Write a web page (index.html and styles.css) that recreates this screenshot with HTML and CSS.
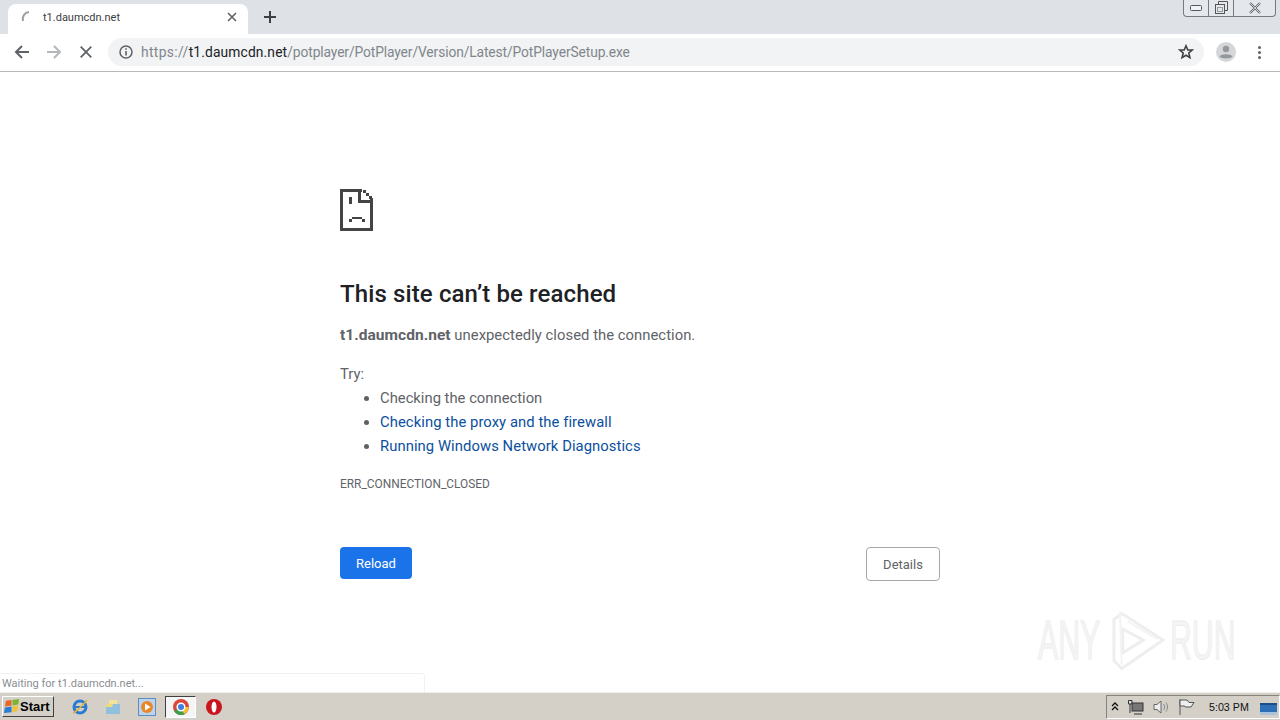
FILE: index.html
```html
<!DOCTYPE html>
<html lang="en">
<head>
<meta charset="utf-8">
<title>t1.daumcdn.net</title>
<link rel="stylesheet" href="styles.css">
</head>
<body>
<div class="tabstrip">
  <div class="tab">
    <svg class="spinner" width="16" height="16" viewBox="0 0 16 16"><path d="M3 12 A7 7 0 0 1 9 3" fill="none" stroke="#9aa0a6" stroke-width="2"/></svg>
    <span class="tab-title">t1.daumcdn.net</span>
    <svg class="tab-close" width="10" height="10" viewBox="0 0 10 10"><path d="M1 1 9 9M9 1 1 9" stroke="#5f6368" stroke-width="1.6"/></svg>
  </div>
  <svg class="newtab" width="12" height="12" viewBox="0 0 12 12"><path d="M6 0V12M0 6H12" stroke="#3c4043" stroke-width="2"/></svg>
  <div class="winctl">
    <div class="wbtn wmin"><svg width="12" height="8" viewBox="0 0 12 8"><rect x="0.5" y="1.5" width="11" height="5" rx="1" fill="#f0f2f5" stroke="#555"/></svg></div>
    <div class="wbtn wmax"><svg width="14" height="14" viewBox="0 0 14 14"><path d="M4.5 3.5V.5H13.5V9.500H10.500" fill="none" stroke="#555"/><rect x="1.500" y="3.500" width="9" height="9" fill="none" stroke="#555"/><rect x="3.500" y="6.500" width="5" height="4" fill="none" stroke="#999"/></svg></div>
    <div class="wbtn wclose"><svg width="14" height="12" viewBox="0 0 14 12"><path d="M2 1 12 11M12 1 2 11" stroke="#666" stroke-width="2.200"/><path d="M2 1 12 11M12 1 2 11" stroke="#e8eaed" stroke-width=".8"/></svg></div>
  </div>
</div>
<div class="toolbar">
  <svg class="navicon first" width="16" height="16" viewBox="0 0 16 16"><path d="M15 8H2M8 2 2 8l6 6" fill="none" stroke="#5f6368" stroke-width="2"/></svg>
  <svg class="navicon" width="16" height="16" viewBox="0 0 16 16"><path d="M1 8H14M8 2l6 6-6 6" fill="none" stroke="#b4b7bb" stroke-width="2"/></svg>
  <svg class="navicon stop" width="12" height="12" viewBox="0 0 12 12"><path d="M.7 .7 11.300 11.300M11.300 .7 .7 11.300" fill="none" stroke="#5f6368" stroke-width="1.800"/></svg>
  <div class="omnibox">
    <svg class="info" width="14" height="14" viewBox="0 0 14 14"><circle cx="7" cy="7" r="6" fill="none" stroke="#5f6368" stroke-width="1.500"/><path d="M7 6v4.500" stroke="#5f6368" stroke-width="1.600"/><path d="M7 3.300v1.500" stroke="#5f6368" stroke-width="1.600"/></svg>
    <span class="url"><span class="scheme">https://</span><span class="domain">t1.daumcdn.net</span><span class="path">/potplayer/PotPlayer/Version/Latest/PotPlayerSetup.exe</span></span>
    <svg class="star" width="16" height="16" viewBox="0 0 16 16"><path d="M8 1.800 9.800 6h4.500l-3.500 3 1.100 4.600L8 11.200l-3.900 2.400L5.200 9 1.700 6h4.500z" fill="none" stroke="#3c4043" stroke-width="1.600"/></svg>
  </div>
  <svg class="avatar" width="20" height="20" viewBox="0 0 20 20"><circle cx="10" cy="10" r="10" fill="#d5d6d8"/><circle cx="10" cy="7" r="3.200" fill="#94979b"/><path d="M3.500 14.500C5 11.500 15 11.500 16.500 14.500 15 17 5 17 3.500 14.500z" fill="#94979b"/></svg>
  <div class="menu"><i></i><i></i><i></i></div>
</div>
<main class="page">
  <div class="content">
    <svg class="sad" width="33" height="42" viewBox="0 0 33 42" shape-rendering="crispEdges">
      <path d="M0 0H22V3H3V39H30V14H18V0H21V11H30V9H33V42H0Z" fill="#444"/>
      <path d="M23 1h3v3h-3zM26 4h3v3h-3zM29 7h3v3h-3zM9 8h3v7H9zM12 28h10v2H12zM9 30h3v3H9zM22 30h3v3h-3z" fill="#444"/>
    </svg>
    <h1 class="heading">This site can’t be reached</h1>
    <p class="summary"><b>t1.daumcdn.net</b> unexpectedly closed the connection.</p>
    <p class="try">Try:</p>
    <ul class="tips">
      <li>Checking the connection</li>
      <li><a>Checking the proxy and the firewall</a></li>
      <li><a>Running Windows Network Diagnostics</a></li>
    </ul>
    <div class="code">ERR_CONNECTION_CLOSED</div>
    <div class="actions">
      <button class="btn reload">Reload</button>
      <button class="btn details">Details</button>
    </div>
  </div>
  <div class="status">Waiting for t1.daumcdn.net...</div>
  <div class="watermark">
    <div class="wm-word"><span>ANY</span></div>
    <svg class="wm-logo" width="55" height="62" viewBox="0 0 56 62"><path d="M4 10V52L12 60 54 31 12 4ZM13 20V44L34 31Z" fill="none" stroke="#eeeeee" stroke-width="3"/><path d="M10 2 12 56M18 12 48 30" stroke="#f3f3f3" stroke-width="2" fill="none"/></svg>
    <div class="wm-word"><span>RUN</span></div>
  </div>
</main>
<footer class="taskbar">
  <button class="start">
    <svg width="17" height="17" viewBox="0 0 18 18"><path d="M2 3 8 2V8L1 9Z" fill="#e8672a"/><path d="M9 2 16 1 15 7 9 8Z" fill="#7db32f"/><path d="M1 10 8 9V15L0 16Z" fill="#2d7cd3"/><path d="M9 9 15 8 14 14 9 15Z" fill="#f2c230"/></svg>
    <span>Start</span>
  </button>
  <div class="quick">
    <svg width="18" height="18" viewBox="0 0 18 18"><circle cx="9" cy="9" r="6" fill="none" stroke="#2a7bd1" stroke-width="3"/><path d="M4 9H15" stroke="#2a7bd1" stroke-width="2"/><path d="M2 15C5 14 13 6 16 2" stroke="#e3b23a" stroke-width="1.500" fill="none"/></svg>
    <svg width="18" height="18" viewBox="0 0 18 18"><path d="M2 6H16V16H2Z" fill="#8fc1de"/><path d="M2 6H9L8 9H2Z" fill="#f0d97c"/><path d="M5 2H13V6H5Z" fill="#f3e39a"/></svg>
    <svg class="wmp" width="18" height="18" viewBox="0 0 18 18"><rect x=".5" y=".5" width="17" height="17" fill="#bcd3ec" stroke="#5b8cc4"/><circle cx="9" cy="9" r="6" fill="#e8872a"/><path d="M7 5.500 12.500 9 7 12.500Z" fill="#fff"/></svg>
    <div class="active-app"><svg width="16" height="16" viewBox="0 0 16 16"><circle cx="8" cy="8" r="8" fill="#d9463a"/><path d="M8 8 1 12A8 8 0 0 0 12 15Z" fill="#3a9e4a"/><path d="M8 8 16 8A8 8 0 0 1 11 15Z" fill="#f2c230"/><circle cx="8" cy="8" r="3.800" fill="#3f7fe0" stroke="#fff" stroke-width="1.500"/></svg></div>
    <svg width="16" height="16" viewBox="0 0 16 16"><circle cx="8" cy="8" r="8" fill="#c8161d"/><ellipse cx="8" cy="8" rx="2.500" ry="5.500" fill="#fff"/></svg>
  </div>
  <div class="tray">
    <svg width="8" height="9" viewBox="0 0 8 9"><path d="M1 4 4 1l3 3M1 8l3-3 3 3" fill="none" stroke="#111" stroke-width="1.300"/></svg>
    <svg width="18" height="16" viewBox="0 0 18 16"><path d="M1.500 1.500H5V5H1.500ZM3 5V14" fill="#ddd" stroke="#333"/><rect x="5" y="4" width="11" height="8" fill="#777" stroke="#333"/><path d="M7 15H15" stroke="#333"/></svg>
    <svg width="17" height="16" viewBox="0 0 17 16"><path d="M1 5.500H4L8 2V14L4 10.500H1Z" fill="#eee" stroke="#666"/><path d="M10.500 5C12 7 12 9 10.500 11M13 3.500C15 6.500 15 9.500 13 12.500" fill="none" stroke="#888"/></svg>
    <svg width="17" height="17" viewBox="0 0 17 17"><path d="M2 1V17" stroke="#555"/><path d="M2 2H9L11 4.500H16L13 9H8L6 8H2Z" fill="#eee" stroke="#555"/></svg>
    <span class="clock">5:03 PM</span>
    <svg class="desktop" width="17" height="12" viewBox="0 0 17 12"><rect width="17" height="12" fill="#2f6fb5"/><rect y="9" width="17" height="3" fill="#a9c3dc"/><rect width="17" height="2" fill="#1b4f8a"/></svg>
  </div>
</footer>
</body>
</html>
```
FILE: styles.css
```css
* { box-sizing: border-box; }
html, body { margin: 0; height: 720px; overflow: hidden; }
body { display: flex; flex-direction: column; font-family: Roboto, "Liberation Sans", sans-serif; background: #fff; color: #3c4043; }

.tabstrip { height: 34px; flex: none; background: #dee1e6; display: flex; align-items: flex-end; padding-left: 8px; position: relative; }
.tab { width: 240px; height: 30px; flex: none; background: #fff; border-radius: 8px 8px 0 0; display: flex; align-items: center; padding: 0 11px 4px 12px; }
.spinner { flex: none; }
.tab-title { margin-left: 7px; font-size: 11px; color: #3c4043; flex: 1; }
.tab-close { flex: none; }
.newtab { margin: 0 0 11px 16px; }
.winctl { position: absolute; top: 0; left: 1183px; width: 93px; height: 17px; display: flex; border: 1px solid #77797c; border-top: 0; border-radius: 0 0 4px 4px; background: #e4e7ec; }
.wbtn { display: flex; align-items: center; justify-content: center; height: 16px; }
.wmin { width: 25px; border-right: 1px solid #77797c; }
.wmax { width: 25px; border-right: 1px solid #77797c; }
.wclose { flex: 1; }

.toolbar { height: 38px; flex: none; display: flex; align-items: center; background: #fff; border-bottom: 1px solid #b6b8ba; padding-bottom: 1px; }
.navicon { flex: none; margin-right: 16px; }
.navicon.first { margin-left: 14px; }
.navicon.stop { margin-left: 2px; margin-right: 16px; }
.omnibox { width: 1096px; height: 28px; flex: none; border-radius: 14px; background: #f1f3f4; display: flex; align-items: center; padding: 0 10px 0 11px; margin-right: 12px; }
.info { flex: none; }
.url { margin-left: 8px; font-size: 13.8px; color: #202124; flex: 1; white-space: nowrap; }
.scheme { color: #80868b; letter-spacing: .37px; }
.domain { letter-spacing: .14px; }
.path { color: #80868b; letter-spacing: -.11px; }
.star { flex: none; }
.avatar { flex: none; }
.menu { display: flex; flex-direction: column; gap: 2px; margin-left: 22px; }
.menu i { width: 3px; height: 3px; background: #5f6368; border-radius: 50%; display: block; }

.page { flex: 1; position: relative; min-height: 0; }
.content { width: 600px; margin-left: 340px; padding-top: 117px; }
.sad { display: block; }
.heading { font-size: 24px; font-weight: 500; letter-spacing: .12px; line-height: 30px; margin: 48px 0 0; color: #202124; }
.summary { font-size: 14.8px; letter-spacing: .04px; line-height: 20px; margin: 16px 0 0; color: #5f6368; }
.summary b { font-size: 15.5px; font-weight: 700; color: #5f6368; }
.try { font-size: 14.8px; line-height: 20px; margin: 19px 0 0; color: #5f6368; }
.tips { margin: 2px 0 0; padding-left: 40px; font-size: 14.8px; line-height: 24px; color: #5f6368; }
.tips a { color: #0b4f9e; letter-spacing: .07px; }
.code { font-size: 11.9px; line-height: 16px; margin-top: 18px; color: #5f6368; }
.actions { display: flex; justify-content: space-between; margin-top: 55px; align-items: flex-start; }
.btn { font-family: inherit; font-size: 13px; border-radius: 4px; padding: 0; }
.reload { width: 72px; height: 32px; background: #1a73e8; color: #fff; border: 0; }
.details { width: 74px; height: 34px; background: #fff; color: #5f6368; border: 1px solid #a8a8a8; }

.status { position: absolute; left: 0; bottom: 0; width: 425px; height: 19px; padding: 2px 2px; font-size: 11px; line-height: 15px; color: #8a8d91; background: #fff; border: 1px solid #f2f2f2; border-left: 0; border-bottom: 0; border-radius: 0 3px 0 0; }
.watermark { position: absolute; left: 1038px; top: 537px; display: flex; align-items: center; }
.wm-logo { margin: 0 5px 0 10px; }
.wm-word { width: 62px; height: 62px; display: flex; align-items: center; font-family: "Liberation Sans", sans-serif; font-size: 55px; color: #f5f5f5; -webkit-text-stroke: 1px #ececec; }
.wm-word span { display: block; transform: scaleX(.55); transform-origin: left center; white-space: nowrap; }

.taskbar { height: 28px; flex: none; background: #d4d0c8; display: flex; align-items: center; border-top: 1px solid #f0eee8; padding-left: 2px; }
.start { width: 52px; height: 21px; display: flex; align-items: center; padding: 0 0 0 1px; background: #d4d0c8; border: 1px solid; border-color: #fff #404040 #404040 #fff; font-family: "Liberation Sans", sans-serif; font-size: 13px; font-weight: 700; color: #000; }
.start svg { margin-right: -1px; }
.quick { display: flex; align-items: center; gap: 15px; margin-left: 17px; }
.wmp { margin-left: 1px; }
.active-app { width: 31px; height: 22px; background: #f5f5f5; border: 1px solid; border-color: #404040 #fff #fff #404040; display: flex; align-items: center; justify-content: center; margin: 0 -5px 0 -6px; }
.tray { margin-left: auto; height: 24px; width: 174px; border: 1px solid; border-color: #85837e #fff #fff #85837e; display: flex; align-items: center; padding-left: 4px; gap: 8px; }
.clock { font-size: 10.7px; font-family: "Liberation Sans", sans-serif; color: #111; margin-left: 6px; }
.desktop { margin-left: auto; margin-right: 2px; margin-top: 4px; }
```
